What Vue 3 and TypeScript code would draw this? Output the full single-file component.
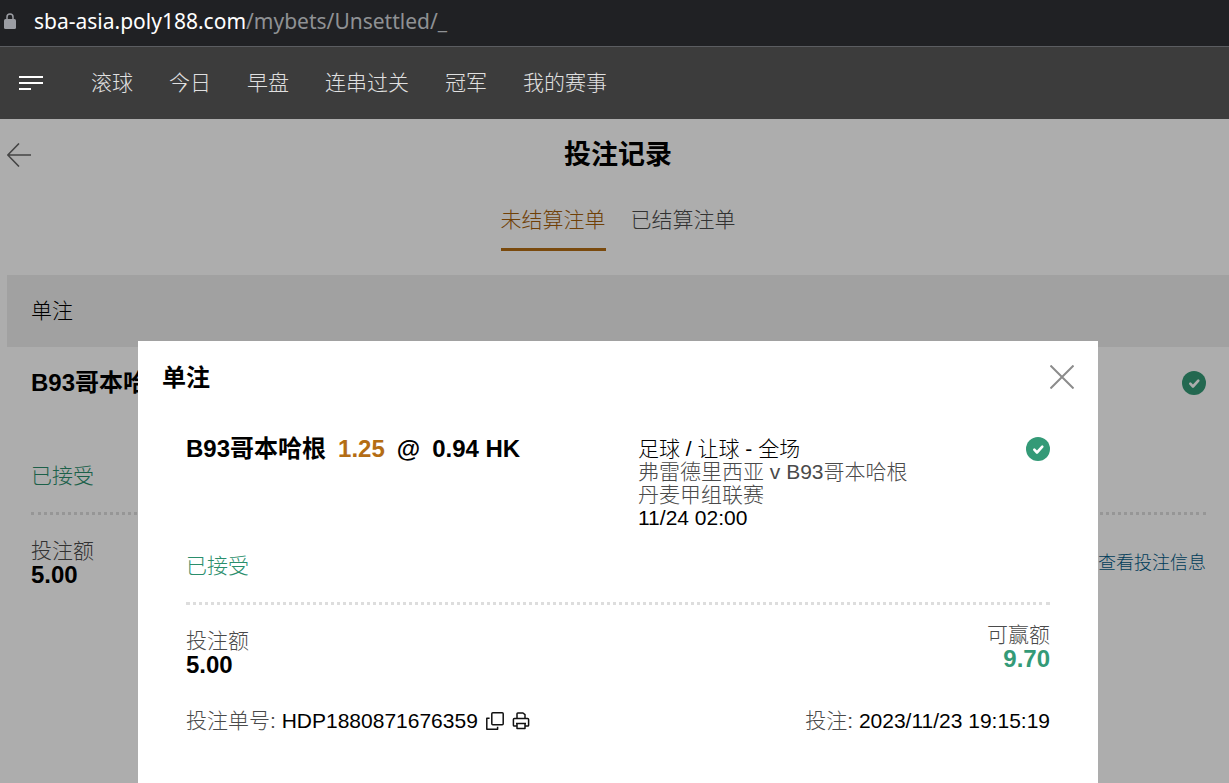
<script setup lang="ts">
import { ref } from 'vue'

interface Bet {
  type: string
  selection: string
  handicap: string
  odds: string
  market: string
  match: string
  league: string
  kickoff: string
  status: string
  stake: string
  winnable: string
  id: string
  placedAt: string
}

const navItems: string[] = ['滚球', '今日', '早盘', '连串过关', '冠军', '我的赛事']
const tabs: string[] = ['未结算注单', '已结算注单']
const activeTab = ref<number>(0)
const dialogOpen = ref<boolean>(true)

const bet: Bet = {
  type: '单注',
  selection: 'B93哥本哈根',
  handicap: '1.25',
  odds: '0.94 HK',
  market: '足球 / 让球 - 全场',
  match: '弗雷德里西亚 v B93哥本哈根',
  league: '丹麦甲组联赛',
  kickoff: '11/24 02:00',
  status: '已接受',
  stake: '5.00',
  winnable: '9.70',
  id: 'HDP1880871676359',
  placedAt: '2023/11/23 19:15:19',
}
</script>

<template>
  <div class="app">
    <div class="address">
      <svg class="lock" viewBox="0 0 12 16" aria-hidden="true">
        <path d="M3 7V4a3 3 0 0 1 6 0v3" fill="none" stroke="#9b9da3" stroke-width="1.5" />
        <rect x="0" y="6" width="12" height="10" rx="1.5" fill="#9b9da3" />
      </svg>
      <span class="url"><span class="host">sba-asia.poly188.com</span>/mybets/Unsettled/_</span>
    </div>

    <header class="topbar">
      <button class="menu" type="button" aria-label="菜单">
        <svg viewBox="0 0 24 14" aria-hidden="true">
          <path d="M0 1h24M0 7h24M0 13h12" stroke="#fff" stroke-width="2" />
        </svg>
      </button>
      <nav class="nav">
        <a v-for="item in navItems" :key="item" href="#">{{ item }}</a>
      </nav>
    </header>

    <div class="stage">
      <main class="page">
        <div class="heading">
          <button class="back" type="button" aria-label="返回">
            <svg viewBox="0 0 24 24" aria-hidden="true">
              <path d="M24 12H1M12 0.5L0.8 12L12 23.5" fill="none" stroke="#666" stroke-width="1.6" />
            </svg>
          </button>
          <h1>投注记录</h1>
        </div>

        <div class="tabs" role="tablist">
          <button
            v-for="(tab, i) in tabs"
            :key="tab"
            type="button"
            role="tab"
            class="tab"
            :class="{ active: i === activeTab }"
            :aria-selected="i === activeTab"
            @click="activeTab = i"
          >{{ tab }}</button>
        </div>

        <section>
          <h2 class="group">{{ bet.type }}</h2>
          <article class="card">
            <div class="pick-row">
              <span class="strong">{{ bet.selection }}</span>
              <svg class="check" viewBox="0 0 24 24" aria-hidden="true">
                <circle cx="12" cy="12" r="12" fill="#349a77" />
                <path d="M8.3 12.6l2.7 2.9l5.3-5.8" fill="none" stroke="#fff" stroke-width="2.6" stroke-linecap="round" stroke-linejoin="round" />
              </svg>
            </div>
            <p class="status">{{ bet.status }}</p>
            <div class="dots"></div>
            <div class="card-foot">
              <div class="amount">
                <span class="label">投注额</span>
                <span class="strong">{{ bet.stake }}</span>
              </div>
              <a href="#" class="details" @click.prevent="dialogOpen = true">查看投注信息</a>
            </div>
          </article>
        </section>
      </main>

      <div v-if="dialogOpen" class="overlay">
        <div class="dialog" role="dialog" aria-modal="true" aria-labelledby="dialog-title">
          <div class="dialog-head">
            <h2 id="dialog-title" class="strong">{{ bet.type }}</h2>
            <button class="close" type="button" aria-label="关闭" @click="dialogOpen = false">
              <svg viewBox="0 0 24 24" aria-hidden="true">
                <path d="M0.5 0.5L23.5 23.5M23.5 0.5L0.5 23.5" stroke="#8c8c8c" stroke-width="2" />
              </svg>
            </button>
          </div>

          <div class="dialog-body">
            <div class="summary">
              <div class="pick strong">
                <span>{{ bet.selection }}</span>
                <span class="handicap">{{ bet.handicap }}</span>
                <span>@</span>
                <span>{{ bet.odds }}</span>
              </div>
              <div class="event">
                <span class="dark">{{ bet.market }}</span>
                <span>{{ bet.match }}</span>
                <span>{{ bet.league }}</span>
                <span class="dark">{{ bet.kickoff }}</span>
              </div>
              <svg class="check" viewBox="0 0 24 24" aria-hidden="true">
                <circle cx="12" cy="12" r="12" fill="#349a77" />
                <path d="M8.3 12.6l2.7 2.9l5.3-5.8" fill="none" stroke="#fff" stroke-width="2.6" stroke-linecap="round" stroke-linejoin="round" />
              </svg>
            </div>
            <p class="status dialog-status">{{ bet.status }}</p>
            <div class="dots"></div>
            <div class="amounts">
              <div class="amount stake">
                <span class="label">投注额</span>
                <span class="strong">{{ bet.stake }}</span>
              </div>
              <div class="amount win">
                <span class="label">可赢额</span>
                <span class="strong green">{{ bet.winnable }}</span>
              </div>
            </div>
            <div class="meta">
              <div class="ticket">
                <span>投注单号: <span class="dark">{{ bet.id }}</span></span>
                <button type="button" class="tool" aria-label="复制">
                  <svg viewBox="0 0 18 18" aria-hidden="true">
                    <rect x="5.8" y="0.8" width="11.4" height="12" rx="1" fill="none" stroke="#111" stroke-width="1.5" />
                    <path d="M3.6 6.2H0.8v11h10.8v-2.4" fill="none" stroke="#111" stroke-width="1.5" stroke-linejoin="round" />
                  </svg>
                </button>
                <button type="button" class="tool" aria-label="打印">
                  <svg viewBox="0 0 18 18" aria-hidden="true">
                    <path d="M5 6.3V1.8Q5 1 5.8 1H11l2 1.6v3.7M5 14H2.2Q1.4 14 1.4 13.2V7.4Q1.4 6.4 2.4 6.4h13.2Q16.6 6.4 16.6 7.4v5.8Q16.6 14 15.8 14H13M5 11.4h8v5.2H5zM4 11.4h10" fill="none" stroke="#111" stroke-width="1.5" stroke-linejoin="round" />
                  </svg>
                </button>
              </div>
              <span>投注: <span class="dark">{{ bet.placedAt }}</span></span>
            </div>
          </div>
        </div>
      </div>
    </div>
  </div>
</template>

<style>
body {
  margin: 0;
}
</style>

<style scoped>
.app {
  display: flex;
  flex-direction: column;
  min-height: 100vh;
  font-family: "Liberation Sans", "Noto Sans CJK SC", sans-serif;
  font-size: 21px;
  font-weight: 300;
  line-height: 24px;
  color: #4a4a4a;
  background: #fff;
}
h1, h2, p {
  margin: 0;
}
button {
  padding: 0;
  border: 0;
  background: none;
  font: inherit;
  color: inherit;
  cursor: pointer;
}
a {
  text-decoration: none;
}
svg {
  display: block;
}
.address {
  display: flex;
  align-items: center;
  gap: 18px;
  height: 47px;
  padding-left: 4px;
  padding-bottom: 4px;
  box-sizing: border-box;
  background: #202124;
  border-bottom: 1px solid #5b5d61;
  font-family: "Noto Sans", sans-serif;
  font-weight: 400;
  color: #8f9194;
}
.lock {
  width: 12px;
  height: 16px;
}
.host {
  color: #fff;
}
.topbar {
  display: flex;
  align-items: center;
  gap: 48px;
  height: 72px;
  padding-left: 19px;
  background: #3c3c3c;
}
.menu svg {
  width: 24px;
  height: 14px;
}
.nav {
  display: flex;
  gap: 36px;
}
.nav a {
  color: #e0e0e0;
}
.stage {
  position: relative;
  display: flex;
  flex: 1;
}
.page {
  flex: 1;
  padding-left: 7px;
}
.heading {
  display: grid;
  grid-template-columns: 24px 1fr 24px;
  align-items: center;
  height: 72px;
}
.back svg, .close svg, .check {
  width: 24px;
  height: 24px;
}
h1 {
  font-size: 27px;
  font-weight: 700;
  line-height: 28px;
  text-align: center;
  color: #000;
}
.tabs {
  display: flex;
  justify-content: center;
  gap: 25px;
  margin-bottom: 24px;
}
.tab {
  height: 60px;
  border-bottom: 3px solid transparent;
}
.tab.active {
  color: #a65f0a;
  border-color: #b46d14;
}
.group {
  padding: 24px;
  font-size: 21px;
  font-weight: 300;
  color: #000;
  background: #ededed;
}
.card {
  padding: 24px 23px 24px 24px;
}
.strong {
  font-size: 24px;
  font-weight: 700;
  color: #000;
}
.pick-row {
  display: flex;
  justify-content: space-between;
  margin-bottom: 69px;
}
.status {
  margin-bottom: 24px;
  color: #2a8e6c;
}
.dots {
  border-top: 3px dotted #ddd;
}
.card-foot {
  display: flex;
  align-items: center;
  justify-content: space-between;
  margin-top: 24px;
}
.amount {
  display: flex;
  flex-direction: column;
}
.details {
  font-size: 18px;
  color: #005a87;
}
.overlay {
  position: absolute;
  inset: 0;
  display: flex;
  justify-content: center;
  padding: 222px 0 0 7px;
  background: rgba(0, 0, 0, 0.32);
}
.dialog {
  width: 960px;
  max-width: 100%;
  box-sizing: border-box;
  padding: 24px;
  background: #fff;
}
.dialog-head {
  display: flex;
  justify-content: space-between;
  margin-bottom: 48px;
}
.dialog-head .strong {
  line-height: 26px;
  height: 24px;
}
.dialog-body {
  padding: 0 24px;
}
.summary {
  display: grid;
  grid-template-columns: 452px 1fr 24px;
}
.pick {
  display: flex;
  gap: 12px;
}
.handicap {
  color: #b46d14;
}
.event {
  display: flex;
  flex-direction: column;
  line-height: 23px;
}
.dark {
  color: #000;
}
.dialog-status {
  margin-top: 25px;
}
.amounts {
  display: flex;
  justify-content: space-between;
  margin-top: 18px;
}
.stake {
  margin-top: 6px;
}
.win {
  align-items: flex-end;
}
.strong.green {
  color: #349a77;
}
.meta {
  display: flex;
  justify-content: space-between;
  margin-top: 32px;
}
.ticket {
  display: flex;
  align-items: center;
  gap: 8px;
}
.tool svg {
  width: 18px;
  height: 18px;
}
</style>
